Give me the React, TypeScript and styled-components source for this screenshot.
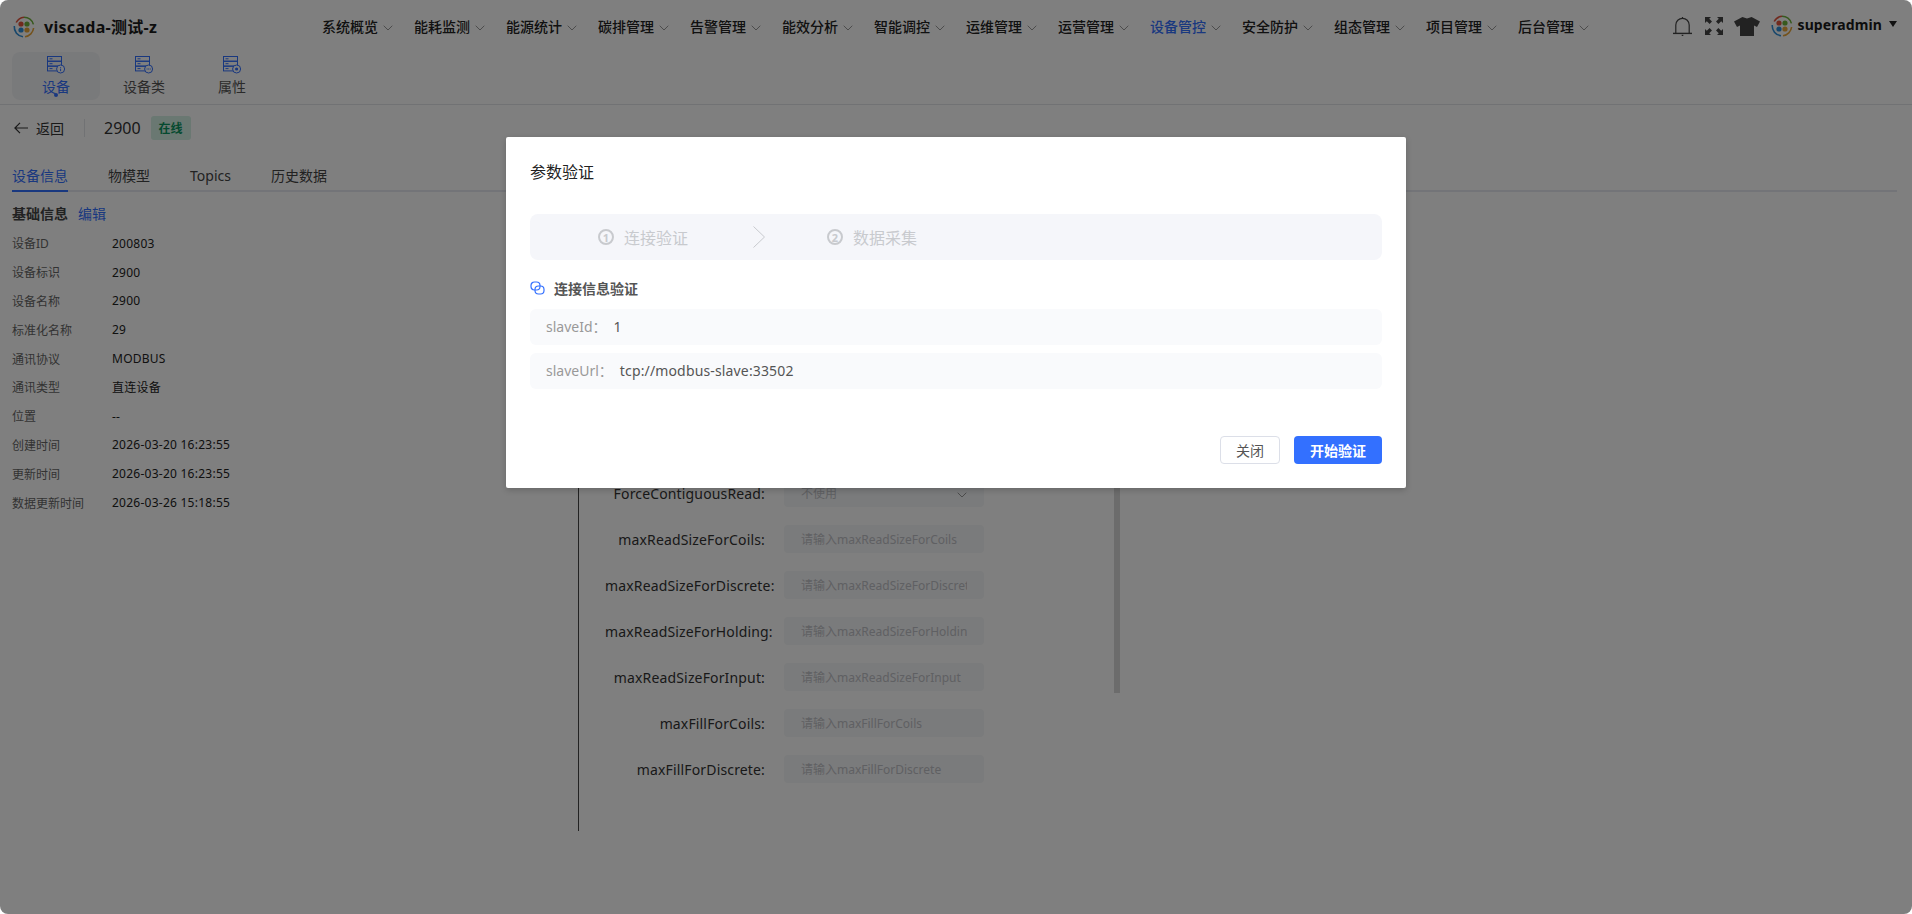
import React from 'react'
import styled, { createGlobalStyle } from 'styled-components'

const FONT = `"Noto Sans", "Noto Sans CJK SC", sans-serif`

const GlobalStyle = createGlobalStyle`
  html, body {
    margin: 0;
    padding: 0;
    background: #fff;
    overflow: hidden;
  }
  * {
    box-sizing: border-box;
  }
`

const Page = styled.div`
  position: relative;
  width: 1912px;
  height: 914px;
  overflow: hidden;
  display: flex;
  flex-direction: column;
  background: #fff;
  font-family: ${FONT};
  color: #1f1f1f;
`

const TopBar = styled.header`
  flex: 0 0 52px;
  display: flex;
  align-items: center;
  padding: 0 15px 0 13px;
`

const Brand = styled.div`
  flex: 0 0 309px;
  display: flex;
  align-items: center;
  gap: 9px;
  margin-top: 2px;
`

const BrandName = styled.span`
  font-size: 16px;
  font-weight: 700;
  color: #1a1a1a;
  letter-spacing: 0.3px;
  margin-top: -2px;
`

const LogoMark = styled.svg`
  flex: none;
  display: block;
`

const Nav = styled.nav`
  display: flex;
  align-items: center;
`

const NavItem = styled.div<{ $active?: boolean }>`
  width: 92px;
  display: flex;
  align-items: center;
  gap: 5px;
  font-size: 14px;
  font-weight: 500;
  color: ${(p) => (p.$active ? '#3370ff' : '#222')};
  white-space: nowrap;
`

const NavArrow = styled.svg`
  width: 10px;
  height: 6px;
  flex: none;
  margin-top: 3px;
  color: #999;
`

const Tools = styled.div`
  margin-left: auto;
  display: flex;
  align-items: center;
`

const ToolIcon = styled.svg<{ $gap: number }>`
  display: block;
  flex: none;
  margin-right: ${(p) => p.$gap}px;
  color: #444;
`

const UserName = styled.span`
  margin-left: 5px;
  font-size: 14px;
  font-weight: 700;
  color: #1a1a1a;
  letter-spacing: 0.1px;
  margin-top: -3px;
`

const Caret = styled.span`
  margin-left: 7px;
  width: 0;
  height: 0;
  border-left: 4px solid transparent;
  border-right: 4px solid transparent;
  border-top: 6px solid #222;
  margin-top: -4px;
`

const SubNav = styled.div`
  flex: 0 0 53px;
  display: flex;
  padding-left: 12px;
  border-bottom: 1px solid #e2e4e9;
`

const SubNavItem = styled.div<{ $active?: boolean }>`
  position: relative;
  width: 88px;
  height: 48px;
  padding-top: 4px;
  display: flex;
  flex-direction: column;
  align-items: center;
  border-radius: 8px;
  background: ${(p) => (p.$active ? '#f3f4f7' : 'transparent')};
  color: ${(p) => (p.$active ? '#3370ff' : '#555')};
  font-size: 14px;
  line-height: 20px;

  ${(p) =>
    p.$active &&
    `&::after {
      content: '';
      position: absolute;
      left: 42px;
      bottom: 3px;
      width: 4px;
      height: 4px;
      border-radius: 50%;
      background: #3370ff;
    }`}
`

const SubNavGlyph = styled.svg`
  display: block;
  flex: none;
  color: #3370ff;
`

const SubNavLabel = styled.span`
  margin-top: 3px;
`

const HeaderRow = styled.div`
  flex: 0 0 46px;
  display: flex;
  align-items: center;
  padding-left: 14px;
`

const BackLink = styled.div`
  display: flex;
  align-items: center;
  gap: 8px;
  font-size: 14px;
  color: #333;
`

const HeaderDivider = styled.span`
  width: 1px;
  height: 18px;
  margin: 0 19px 0 20px;
  background: #e2e4e9;
`

const DeviceName = styled.span`
  font-size: 16px;
  color: #333;
  margin-right: 10px;
`

const StatusTag = styled.span`
  width: 40px;
  height: 24px;
  padding-top: 1px;
  border-radius: 3px;
  background: #d5f0e4;
  color: #0b9560;
  font-size: 12px;
  font-weight: 700;
  line-height: 24px;
  text-align: center;
`

const TabBar = styled.div`
  flex: 0 0 32px;
  margin: 9px 15px 0 12px;
  display: flex;
  gap: 40px;
  border-bottom: 2px solid #e7e9f0;
`

const Tab = styled.div<{ $active?: boolean }>`
  height: 32px;
  margin-bottom: -2px;
  line-height: 32px;
  font-size: 14px;
  color: ${(p) => (p.$active ? '#3370ff' : '#444')};
  border-bottom: 2px solid ${(p) => (p.$active ? '#3370ff' : 'transparent')};
`

const Body = styled.div`
  flex: 0 0 639px;
  display: flex;
  padding-left: 12px;
`

const InfoColumn = styled.section`
  flex: 0 0 566px;
  padding-top: 11px;
`

const InfoHeading = styled.div`
  display: flex;
  align-items: center;
  gap: 10px;
  height: 20px;
  margin-bottom: 6px;
  font-size: 14px;
  font-weight: 700;
  color: #444;
`

const EditLink = styled.span`
  font-weight: 400;
  color: #3370ff;
`

const InfoRow = styled.div`
  display: flex;
  align-items: center;
  height: 28.8px;
  font-size: 12px;
`

const InfoLabel = styled.span`
  width: 100px;
  color: #666;
`

const InfoValue = styled.span`
  color: #222;
  letter-spacing: 0.25px;
`

const FormPanel = styled.section`
  flex: 0 0 542px;
  display: flex;
  border-left: 1px solid #444;
`

const FormColumn = styled.div`
  flex: 0 0 535px;
  padding: 287px 0 0 26px;
  display: flex;
  flex-direction: column;
  gap: 18px;
`

const ScrollThumb = styled.div`
  flex: 0 0 6px;
  height: 501px;
  background: #d8d8d8;
`

const FormRow = styled.div`
  display: flex;
  align-items: center;
  height: 28px;
`

const FieldLabel = styled.label`
  flex: 0 0 160px;
  min-width: 0;
  margin-right: 19px;
  font-size: 14px;
  letter-spacing: 0.15px;
  color: #333;
  text-align: right;
  white-space: nowrap;
`

const FieldInput = styled.input`
  width: 200px;
  height: 28px;
  padding: 0 17px;
  border: 0;
  border-radius: 4px;
  outline: none;
  background: #f5f6f8;
  font-family: ${FONT};
  font-size: 12px;
  color: #333;

  &::placeholder {
    color: #bfc1c6;
  }
`

const FieldSelect = styled.div`
  width: 200px;
  height: 28px;
  padding: 0 17px;
  display: flex;
  align-items: center;
  justify-content: space-between;
  border-radius: 4px;
  background: #f5f6f8;
  font-size: 12px;
  color: #bfc1c6;
`

const Overlay = styled.div`
  position: absolute;
  inset: 0;
  padding-top: 137px;
  display: flex;
  justify-content: center;
  align-items: flex-start;
  border-radius: 8px;
  background: rgba(0, 0, 0, 0.5);
`

const Modal = styled.div`
  width: 900px;
  height: 351px;
  padding: 0 24px;
  display: flex;
  flex-direction: column;
  border-radius: 2px;
  background: #fff;
  box-shadow: 0 2px 6px rgba(0, 0, 0, 0.2);
`

const ModalTitle = styled.h2`
  margin: 0;
  height: 77px;
  padding-top: 24px;
  font-size: 16px;
  line-height: 22px;
  font-weight: 400;
  color: #222;
`

const Steps = styled.div`
  height: 46px;
  display: flex;
  align-items: center;
  padding-left: 68px;
  border-radius: 8px;
  background: #f5f6fa;
  color: #c8cace;
  font-size: 16px;
`

const Step = styled.div`
  display: flex;
  align-items: center;
  gap: 10px;
`

const StepNumber = styled.span`
  width: 16px;
  height: 16px;
  display: flex;
  align-items: center;
  justify-content: center;
  border: 2px solid #c8cace;
  border-radius: 50%;
  font-size: 11px;
  font-weight: 700;
  line-height: 1;
`

const StepArrow = styled.svg`
  flex: none;
  margin: 0 62px 0 65px;
  color: #c8cace;
`

const SectionHeading = styled.div`
  margin-top: 18px;
  height: 20px;
  display: flex;
  align-items: center;
  gap: 9px;
  font-size: 14px;
  font-weight: 700;
  color: #555;
`

const ParamList = styled.div`
  margin-top: 11px;
  display: flex;
  flex-direction: column;
  gap: 8px;
`

const ParamRow = styled.div`
  height: 36px;
  padding: 0 0 2px 16px;
  display: flex;
  align-items: center;
  gap: 7px;
  border-radius: 6px;
  background: #f9fafc;
  font-size: 14px;
`

const ParamName = styled.span`
  color: #999;
`

const ParamValue = styled.span`
  color: #555;
  letter-spacing: 0.15px;
`

const ModalFooter = styled.div`
  margin-top: 47px;
  display: flex;
  justify-content: flex-end;
  gap: 14px;
`

const GhostButton = styled.button`
  width: 60px;
  height: 28px;
  border: 1px solid #dcdfe8;
  border-radius: 4px;
  background: #fff;
  font-family: ${FONT};
  font-size: 14px;
  color: #555;
`

const PrimaryButton = styled.button`
  width: 88px;
  height: 28px;
  border: 0;
  border-radius: 4px;
  background: #3370ff;
  font-family: ${FONT};
  font-size: 14px;
  font-weight: 700;
  color: #fff;
`

const navItems = [
  '系统概览',
  '能耗监测',
  '能源统计',
  '碳排管理',
  '告警管理',
  '能效分析',
  '智能调控',
  '运维管理',
  '运营管理',
  '设备管控',
  '安全防护',
  '组态管理',
  '项目管理',
  '后台管理'
]

const infoRows = [
  ['设备ID', '200803'],
  ['设备标识', '2900'],
  ['设备名称', '2900'],
  ['标准化名称', '29'],
  ['通讯协议', 'MODBUS'],
  ['通讯类型', '直连设备'],
  ['位置', '--'],
  ['创建时间', '2026-03-20 16:23:55'],
  ['更新时间', '2026-03-20 16:23:55'],
  ['数据更新时间', '2026-03-26 15:18:55']
]

const formFields = [
  'maxReadSizeForCoils',
  'maxReadSizeForDiscrete',
  'maxReadSizeForHolding',
  'maxReadSizeForInput',
  'maxFillForCoils',
  'maxFillForDiscrete'
]

const Logo: React.FC = () => (
  <LogoMark width="22" height="22" viewBox="0 0 22 22" fill="none">
    <path d="M3.2 6.5A9.8 9.8 0 0 1 11 1.2" stroke="#e2553d" strokeWidth="1.6" />
    <path d="M11 1.2a9.8 9.8 0 0 1 9.4 7.2" stroke="#6fb23c" strokeWidth="1.6" />
    <path d="M20.6 12A9.8 9.8 0 0 1 12 20.7" stroke="#e9a63a" strokeWidth="1.6" />
    <path d="M10 20.7A9.8 9.8 0 0 1 1.3 10" stroke="#2f8fd8" strokeWidth="1.6" />
    <circle cx="8" cy="8" r="2.6" fill="#e2553d" />
    <circle cx="14" cy="8" r="2.6" fill="#6fb23c" />
    <circle cx="8" cy="14" r="2.6" fill="#2f8fd8" />
    <circle cx="14" cy="14" r="2.6" fill="#e9a63a" />
  </LogoMark>
)

const ChevronDown: React.FC = () => (
  <NavArrow viewBox="0 0 10 6" fill="none">
    <path d="M.7.7 5 5 9.3.7" stroke="currentColor" strokeWidth="1" />
  </NavArrow>
)

const ServerIcon: React.FC<{ badge: 'info' | 'more' | 'attr' }> = ({ badge }) => (
  <SubNavGlyph width="20" height="18" viewBox="0 0 20 18" fill="none">
    <g stroke="currentColor" strokeWidth="1">
      <rect x="1.5" y="0.5" width="14" height="4.6" />
      <rect x="1.5" y="5.4" width="14" height="4.6" />
      <rect x="1.5" y="10.3" width="10" height="4.6" />
      <path d="M3.5 2.8h3M3.5 7.7h3M3.5 12.6h3" />
      <circle cx="14.6" cy="13" r="4" fill="#fff" />
    </g>
    {badge === 'info' && <path d="M14.6 11v.8M14.6 12.6v2.6" stroke="currentColor" strokeWidth="1" />}
    {badge === 'more' && <path d="M12.6 13h1M14.2 13h1M15.8 13h1" stroke="currentColor" strokeWidth="1" />}
    {badge === 'attr' && <circle cx="14.6" cy="13" r="1.6" fill="currentColor" />}
  </SubNavGlyph>
)

const App: React.FC = () => (
  <Page>
    <GlobalStyle />
    <TopBar>
      <Brand>
        <Logo />
        <BrandName>viscada-测试-z</BrandName>
      </Brand>
      <Nav>
        {navItems.map((item) => (
          <NavItem key={item} $active={item === '设备管控'}>
            {item}
            <ChevronDown />
          </NavItem>
        ))}
      </Nav>
      <Tools>
        <ToolIcon $gap={13} width="19" height="20" viewBox="0 0 19 20" fill="none">
          <path d="M2.8 17V9a6.7 6.7 0 0 1 13.4 0v8" stroke="currentColor" strokeWidth="1.2" />
          <path d="M0 17.4h19" stroke="currentColor" strokeWidth="1.4" />
          <path d="M9.5 1V2.4M8.7 19.4h1.6" stroke="currentColor" strokeWidth="1.2" />
        </ToolIcon>
        <ToolIcon $gap={11} width="18" height="18" viewBox="0 0 18 18" fill="currentColor">
          <path d="M0 0h6L4.2 1.8 7 4.6 4.6 7 1.8 4.2 0 6z" />
          <path d="M18 0v6l-1.8-1.8L13.4 7 11 4.6l2.8-2.8L12 0z" />
          <path d="M0 18v-6l1.8 1.8L4.6 11 7 13.4l-2.8 2.8L6 18z" />
          <path d="M18 18h-6l1.8-1.8L11 13.4 13.4 11l2.8 2.8L18 12z" />
        </ToolIcon>
        <ToolIcon $gap={11} width="26" height="19" viewBox="0 0 26 19" fill="currentColor">
          <path d="M8.4 0 13 1.6 17.6 0 26 4.6 23 10l-3-1.4V19H6V8.6L3 10 0 4.6z" />
        </ToolIcon>
        <Logo />
        <UserName>superadmin</UserName>
        <Caret />
      </Tools>
    </TopBar>

    <SubNav>
      <SubNavItem $active>
        <ServerIcon badge="info" />
        <SubNavLabel>设备</SubNavLabel>
      </SubNavItem>
      <SubNavItem>
        <ServerIcon badge="more" />
        <SubNavLabel>设备类</SubNavLabel>
      </SubNavItem>
      <SubNavItem>
        <ServerIcon badge="attr" />
        <SubNavLabel>属性</SubNavLabel>
      </SubNavItem>
    </SubNav>

    <HeaderRow>
      <BackLink>
        <svg width="14" height="12" viewBox="0 0 14 12" fill="none">
          <path d="M14 6H1M6 .8.9 6 6 11.2" stroke="currentColor" strokeWidth="1.2" />
        </svg>
        返回
      </BackLink>
      <HeaderDivider />
      <DeviceName>2900</DeviceName>
      <StatusTag>在线</StatusTag>
    </HeaderRow>

    <TabBar>
      <Tab $active>设备信息</Tab>
      <Tab>物模型</Tab>
      <Tab>Topics</Tab>
      <Tab>历史数据</Tab>
    </TabBar>

    <Body>
      <InfoColumn>
        <InfoHeading>
          基础信息
          <EditLink>编辑</EditLink>
        </InfoHeading>
        {infoRows.map(([label, value]) => (
          <InfoRow key={label}>
            <InfoLabel>{label}</InfoLabel>
            <InfoValue>{value}</InfoValue>
          </InfoRow>
        ))}
      </InfoColumn>
      <FormPanel>
        <FormColumn>
          <FormRow>
            <FieldLabel>ForceContiguousRead:</FieldLabel>
            <FieldSelect>
              不使用
              <ChevronDown />
            </FieldSelect>
          </FormRow>
          {formFields.map((name) => (
            <FormRow key={name}>
              <FieldLabel>{name}:</FieldLabel>
              <FieldInput readOnly placeholder={`请输入${name}`} />
            </FormRow>
          ))}
        </FormColumn>
        <ScrollThumb />
      </FormPanel>
    </Body>

    <Overlay>
      <Modal>
        <ModalTitle>参数验证</ModalTitle>
        <Steps>
          <Step>
            <StepNumber>1</StepNumber>
            连接验证
          </Step>
          <StepArrow width="12" height="22" viewBox="0 0 12 22" fill="none">
            <path d="M.5.5 11.5 11 .5 21.5" stroke="currentColor" strokeWidth="1" />
          </StepArrow>
          <Step>
            <StepNumber>2</StepNumber>
            数据采集
          </Step>
        </Steps>
        <SectionHeading>
          <svg width="15" height="14" viewBox="0 0 15 14" fill="none">
            <rect x="1" y="1" width="9" height="8" rx="3.5" stroke="#3370ff" strokeWidth="1.2" />
            <rect x="5" y="5" width="9" height="8" rx="3.5" stroke="#3370ff" strokeWidth="1.2" />
          </svg>
          连接信息验证
        </SectionHeading>
        <ParamList>
          <ParamRow>
            <ParamName>slaveId：</ParamName>
            <ParamValue>1</ParamValue>
          </ParamRow>
          <ParamRow>
            <ParamName>slaveUrl：</ParamName>
            <ParamValue>tcp://modbus-slave:33502</ParamValue>
          </ParamRow>
        </ParamList>
        <ModalFooter>
          <GhostButton>关闭</GhostButton>
          <PrimaryButton>开始验证</PrimaryButton>
        </ModalFooter>
      </Modal>
    </Overlay>
  </Page>
)

export default App
